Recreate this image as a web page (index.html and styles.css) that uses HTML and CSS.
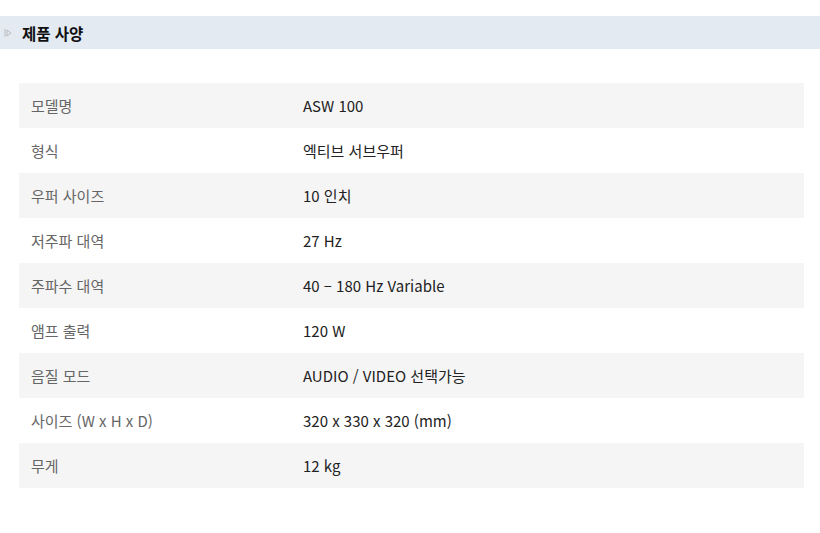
FILE: index.html
```html
<!DOCTYPE html>
<html lang="ko">
<head>
<meta charset="utf-8">
<link rel="stylesheet" href="styles.css">
</head>
<body>
<div class="title-bar">
  <svg class="title-icon" width="8" height="10" viewBox="0 0 8 10"><path d="M1 1 L1 9 M3 2 L3 8 M3 2 L7 5 L3 8" stroke="#bbb" stroke-width="1" fill="none"/></svg>
  <h2 class="title">제품 사양</h2>
</div>
<table class="spec">
  <tr><td class="label">모델명</td><td class="value">ASW 100</td></tr>
  <tr><td class="label">형식</td><td class="value">엑티브 서브우퍼</td></tr>
  <tr><td class="label">우퍼 사이즈</td><td class="value">10 인치</td></tr>
  <tr><td class="label">저주파 대역</td><td class="value">27 Hz</td></tr>
  <tr><td class="label">주파수 대역</td><td class="value">40 – 180 Hz Variable</td></tr>
  <tr><td class="label">앰프 출력</td><td class="value">120 W</td></tr>
  <tr><td class="label">음질 모드</td><td class="value">AUDIO / VIDEO 선택가능</td></tr>
  <tr><td class="label">사이즈 (W x H x D)</td><td class="value">320 x 330 x 320 (mm)</td></tr>
  <tr><td class="label">무게</td><td class="value">12 kg</td></tr>
</table>
</body>
</html>
```
FILE: styles.css
```css
html, body {
  margin: 0;
  padding: 0;
  background: #fff;
  font-family: "Noto Sans CJK KR", "Noto Sans", sans-serif;
}
body {
  padding-top: 16px;
}
.title-bar {
  height: 33px;
  background: #e3eaf2;
  display: flex;
  align-items: center;
  padding-left: 4px;
}
.title-icon {
  margin-right: 10px;
  margin-top: 1px;
}
.title {
  margin: 0;
  font-size: 15.5px;
  font-weight: 700;
  color: #111;
}
.spec {
  margin: 34px 0 0 19px;
  width: 785px;
  border-collapse: collapse;
  table-layout: fixed;
}
.spec tr {
  height: 45px;
}
.spec tr:nth-child(odd) {
  background: #f5f5f5;
}
.spec td {
  padding: 0;
  font-size: 15px;
  vertical-align: middle;
}
.spec td.label {
  width: 272px;
  padding-left: 12px;
  color: #666;
}
.value {
  color: #222;
}
```
